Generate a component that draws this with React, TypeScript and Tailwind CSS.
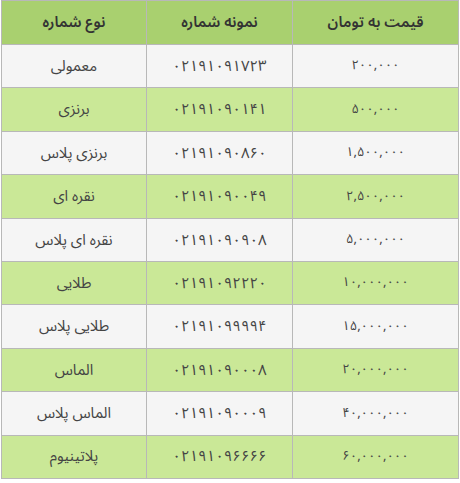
const rows = [
  { type: 'معمولی', sample: '۰۲۱۹۱۰۹۱۷۲۳', price: '۲۰۰,۰۰۰' },
  { type: 'برنزی', sample: '۰۲۱۹۱۰۹۰۱۴۱', price: '۵۰۰,۰۰۰' },
  { type: 'برنزی پلاس', sample: '۰۲۱۹۱۰۹۰۸۶۰', price: '۱,۵۰۰,۰۰۰' },
  { type: 'نقره ای', sample: '۰۲۱۹۱۰۹۰۰۴۹', price: '۲,۵۰۰,۰۰۰' },
  { type: 'نقره ای پلاس', sample: '۰۲۱۹۱۰۹۰۹۰۸', price: '۵,۰۰۰,۰۰۰' },
  { type: 'طلایی', sample: '۰۲۱۹۱۰۹۲۲۲۰', price: '۱۰,۰۰۰,۰۰۰' },
  { type: 'طلایی پلاس', sample: '۰۲۱۹۱۰۹۹۹۹۴', price: '۱۵,۰۰۰,۰۰۰' },
  { type: 'الماس', sample: '۰۲۱۹۱۰۹۰۰۰۸', price: '۲۰,۰۰۰,۰۰۰' },
  { type: 'الماس پلاس', sample: '۰۲۱۹۱۰۹۰۰۰۹', price: '۴۰,۰۰۰,۰۰۰' },
  { type: 'پلاتینیوم', sample: '۰۲۱۹۱۰۹۶۶۶۶', price: '۶۰,۰۰۰,۰۰۰' },
];

export default function App() {
  return (
    <div className="w-[460px] h-[483px] bg-white pl-px pr-[1px]" style={{ fontFamily: '"Noto Sans Arabic", "Noto Naskh Arabic", "DejaVu Sans", sans-serif' }}>
      <table dir="rtl" className="w-[458px] border-collapse text-center text-[#444]">
        <thead>
          <tr className="h-[44px] bg-[#a9d06f] text-[#333] text-[15px]">
            <th className="w-[166px] border border-[#b8b8b8] font-semibold">قیمت به تومان</th>
            <th className="w-[146px] border border-[#b8b8b8] font-semibold">نمونه شماره</th>
            <th className="border border-[#b8b8b8] font-semibold">نوع شماره</th>
          </tr>
        </thead>
        <tbody>
          {rows.map((r, i) => (
            <tr key={r.type} className={`h-[43.4px] text-[15px] ${i % 2 === 0 ? 'bg-[#f5f5f5]' : 'bg-[#cae897]'}`}>
              <td className="border border-[#b8b8b8] text-[13px]">{r.price}</td>
              <td className="border border-[#b8b8b8] text-[15px]">{r.sample}</td>
              <td className="border border-[#b8b8b8]">{r.type}</td>
            </tr>
          ))}
        </tbody>
      </table>
    </div>
  );
}
